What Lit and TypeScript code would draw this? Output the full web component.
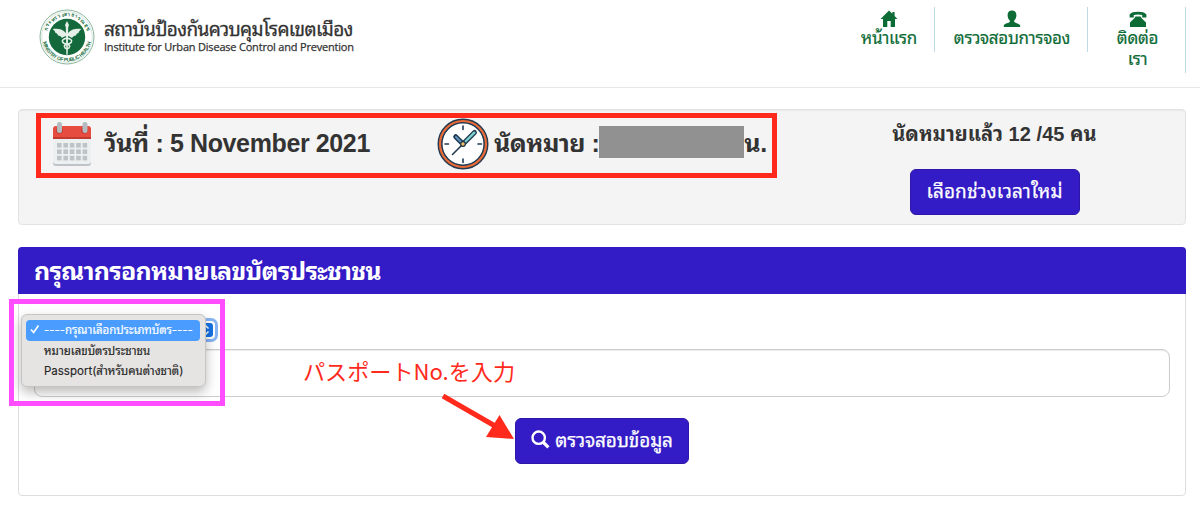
import { LitElement, html, css, svg } from 'lit';
import { customElement, property, state } from 'lit/decorators.js';
import { classMap } from 'lit/directives/class-map.js';

const icons = {
  home: svg`<path d="M9 0.5 L0.5 9 H3 V17 H7.3 V11 H10.7 V17 H15 V9 H17.5 L14.6 6 V2 H12.4 V3.8 Z" />`,
  user: svg`<path d="M9 0.5 C6 0.5 4.6 2.4 4.6 5 C4.6 7.4 5.4 9.4 6.8 10.4 V11.8 C6.2 13.2 1.2 13.4 0.8 15.6 V17 H17.2 V15.6 C16.8 13.4 11.8 13.2 11.2 11.8 V10.4 C12.6 9.4 13.4 7.4 13.4 5 C13.4 2.4 12 0.5 9 0.5 Z" />`,
  phone: svg`<path d="M0.6 7.4 V4.6 C2 2.4 5 1.8 9 1.8 C13 1.8 16 2.4 17.4 4.6 V7.4 H13.2 V5 C11 4.2 7 4.2 4.8 5 V7.4 Z M6.4 6.4 H11.6 L12.4 8 L17 12.4 V17 H1 V12.4 L5.6 8 Z" />`,
};

@customElement('nav-item')
export class NavItem extends LitElement {
  static styles = css`
    :host {
      display: block;
      box-sizing: border-box;
      border-right: 1px solid #bcdbe5;
      padding: 3px 0 0 2px;
      color: #0d6b36;
      font-size: 17px;
      letter-spacing: -0.3px;
      line-height: 21px;
      text-align: center;
      -webkit-text-stroke: 0.2px;
    }
    .icon {
      display: block;
      width: 18px;
      height: 18px;
      margin: 0 auto;
      fill: currentColor;
    }
    .label {
      display: block;
      white-space: pre-line;
    }
  `;

  @property() icon: keyof typeof icons = 'home';
  @property() label = '';

  render() {
    return html`
      <svg class="icon" viewBox="0 0 18 18">${icons[this.icon]}</svg>
      <span class="label">${this.label}</span>
    `;
  }
}

@customElement('moph-logo')
export class MophLogo extends LitElement {
  static styles = css`
    :host {
      display: block;
      width: 56px;
      height: 56px;
    }
    .ring-text {
      font: bold 5px 'Liberation Sans', sans-serif;
      fill: #1b6f42;
    }
  `;

  render() {
    return html`
      <svg width="56" height="56" viewBox="0 0 56 56">
        <defs>
          <path id="top" d="M7.2 28 A20.8 20.8 0 0 1 48.8 28" />
          <path id="bottom" d="M3.6 28 A24.4 24.4 0 0 0 52.4 28" />
        </defs>
        <circle cx="28" cy="28" r="27" fill="#fff" stroke="#8ab59b" stroke-width="1" />
        <circle cx="28" cy="28" r="25.3" fill="none" stroke="#bcd5c6" stroke-width=".6" />
        <circle cx="28" cy="28" r="18.2" fill="#13693b" />
        <text class="ring-text"><textPath href="#top" startOffset="50%" text-anchor="middle" textLength="52">กระทรวงสาธารณสุข</textPath></text>
        <text class="ring-text"><textPath href="#bottom" startOffset="50%" text-anchor="middle" textLength="66">MINISTRY OF PUBLIC HEALTH</textPath></text>
        <g fill="#e4efe8">
          <path d="M28 12 L30 16 L29 19 H27 L26 16 Z M26.8 18 H29.2 L28.7 45 L28 47 L27.3 45 Z" />
          <path d="M27 24 C24 20 19 19 13.5 20 C15 21 16 22 16.5 24 C18 24 18.5 25 19 26.5 C21 26.5 22 27.5 23 29 C24.5 28 26 27 27 27 Z" />
          <path d="M29 24 C32 20 37 19 42.5 20 C41 21 40 22 39.5 24 C38 24 37.5 25 37 26.5 C35 26.5 34 27.5 33 29 C31.5 28 30 27 29 27 Z" />
        </g>
        <path d="M28 29 C20 31 24 35 28 35 C32 36 31 39 28 40 M28 29 C36 31 32 35 28 35 C24 36 25 39 28 40" fill="none" stroke="#e4efe8" stroke-width="1.6" />
      </svg>
    `;
  }
}

@customElement('app-root')
export class AppRoot extends LitElement {
  static styles = css`
    :host {
      display: block;
      position: relative;
      box-sizing: border-box;
      height: 514px;
      overflow: hidden;
      background: #fff;
      color: #333;
      font-family: 'Liberation Sans', 'Noto Sans Thai Looped', Loma, 'Noto Sans Thai', sans-serif;
    }
    .header {
      display: flex;
      justify-content: space-between;
      box-sizing: border-box;
      height: 88px;
      padding: 7px 14px 0 39px;
      border-bottom: 1px solid #e7e7e7;
    }
    .brand {
      display: flex;
      gap: 9px;
      padding-top: 2px;
    }
    .brand-th {
      padding-top: 9px;
      margin-bottom: -2px;
      font-size: 19px;
      letter-spacing: -0.64px;
      line-height: 24px;
      white-space: nowrap;
      -webkit-text-stroke: 0.3px;
    }
    .brand-en {
      font: 11px/13px 'Open Sans', sans-serif;
      letter-spacing: -0.2px;
      white-space: nowrap;
      -webkit-text-stroke: 0.25px;
    }
    .nav {
      display: grid;
      grid-template-columns: 93px 153px 98px;
      align-items: start;
    }
    .nav-item {
      height: 45px;
    }
    .nav-item.tall {
      height: 66px;
    }
    .summary {
      display: grid;
      grid-template-columns: 402px 389px 1fr;
      box-sizing: border-box;
      height: 116px;
      margin: 21px 14px 0 18px;
      padding-left: 33px;
      border: 1px solid #e3e3e3;
      border-radius: 4px;
      background: #f4f4f4;
      box-shadow: inset 0 1px 1px rgba(0, 0, 0, 0.05);
    }
    .fact {
      display: flex;
      align-items: center;
      height: 68px;
      font-size: 25px;
      font-weight: bold;
      white-space: nowrap;
    }
    .date {
      gap: 12px;
    }
    .date-text,
    .slot-text,
    .unit {
      padding-bottom: 6px;
    }
    .date-text {
      letter-spacing: -0.38px;
    }
    .slot-text {
      letter-spacing: -0.5px;
    }
    .redacted {
      width: 145px;
      height: 32px;
      margin-top: -4px;
      background: #919191;
    }
    .unit {
      letter-spacing: -0.5px;
    }
    .clock {
      margin: 0 5px 0 -17px;
    }
    .quota {
      display: flex;
      flex-direction: column;
      align-items: center;
      padding-right: 39px;
    }
    .quota-text {
      padding-top: 9px;
      margin-bottom: 20px;
      font-size: 20px;
      font-weight: bold;
      letter-spacing: 0.05px;
      line-height: 30px;
      white-space: nowrap;
    }
    .button {
      display: flex;
      align-items: center;
      justify-content: center;
      gap: 5px;
      box-sizing: border-box;
      height: 46px;
      padding: 0;
      border: 1px solid #2e17a8;
      border-radius: 6px;
      background: #331bc6;
      color: #fff;
      font: 19px 'Liberation Sans', 'Noto Sans Thai Looped', Loma, 'Noto Sans Thai', sans-serif;
      white-space: nowrap;
      -webkit-text-stroke: 0.25px;
    }
    .pick-time {
      width: 170px;
      letter-spacing: 0.1px;
    }
    .pick-text,
    .lookup-text {
      padding-bottom: 6px;
    }
    .lookup-icon {
      margin-bottom: 3px;
    }
    .lookup {
      width: 174px;
      margin: 21px auto 0 496px;
      letter-spacing: -0.15px;
    }
    .panel {
      box-sizing: border-box;
      height: 249px;
      margin: 22px 14px 0 18px;
      border: 1px solid #ddd;
      border-radius: 4px;
    }
    .panel-title {
      height: 47px;
      margin: -1px -1px 0;
      padding-left: 16px;
      border-radius: 4px 4px 0 0;
      background: #331bc6;
      color: #fff;
      font-size: 25px;
      font-weight: bold;
      letter-spacing: -0.75px;
      line-height: 49px;
      white-space: nowrap;
    }
    .select {
      display: flex;
      justify-content: flex-end;
      align-items: center;
      box-sizing: border-box;
      width: 179px;
      height: 18px;
      margin: 27px 0 0 17px;
      padding-right: 2px;
      border-radius: 4px;
      background: #fff;
      box-shadow: 0 0 0 3px #86b4f4;
    }
    .card-no {
      display: block;
      box-sizing: border-box;
      width: 1136px;
      height: 48px;
      margin: 10px 0 0 15px;
      border: 1px solid #ccc;
      border-radius: 8px;
      box-shadow: inset 0 1px 1px rgba(0, 0, 0, 0.08);
    }
    .menu {
      position: absolute;
      left: 21px;
      top: 314px;
      box-sizing: border-box;
      width: 185px;
      height: 73px;
      padding: 5px 5px 5px 4px;
      border: 1px solid #c7c5c3;
      border-radius: 6px;
      background: #e6e4e2;
      box-shadow: 0 5px 12px rgba(0, 0, 0, 0.28);
    }
    .option {
      display: flex;
      align-items: center;
      height: 20.5px;
      border-radius: 4px;
      color: #262626;
      font: 11.5px Inter, 'Noto Sans Thai Looped', Loma, 'Noto Sans Thai', sans-serif;
      white-space: nowrap;
      -webkit-text-stroke: 0.15px;
    }
    .option.selected {
      background: #4a9dff;
      color: #fff;
      letter-spacing: -0.06px;
    }
    .option-text {
      padding-bottom: 2px;
    }
    .tick {
      width: 18px;
      padding-left: 4px;
      box-sizing: border-box;
    }
    .mark {
      position: absolute;
      box-sizing: border-box;
      pointer-events: none;
    }
    .mark-red {
      left: 36px;
      top: 113px;
      width: 741px;
      height: 65px;
      border: 5px solid #ff2a1c;
    }
    .mark-pink {
      left: 9px;
      top: 299px;
      width: 216px;
      height: 107px;
      border: 5px solid #ff4dff;
    }
    .note {
      position: absolute;
      left: 303px;
      top: 354px;
      color: #ff2a1c;
      font: 400 22.1px/32px 'Noto Sans CJK JP', sans-serif;
      white-space: nowrap;
    }
    .arrow {
      position: absolute;
      left: 440px;
      top: 390px;
    }
  `;

  @state() private selected = 0;

  private options = ['----กรุณาเลือกประเภทบัตร----', 'หมายเลขบัตรประชาชน', 'Passport(สำหรับคนต่างชาติ)'];

  private renderCalendar() {
    const cells = [0, 1, 2].flatMap((row) =>
      [0, 1, 2, 3, 4].map((col) => svg`<rect x=${5 + col * 6.4} y=${22 + row * 6.4} width="4.6" height="4.6" />`)
    );
    return html`
      <svg width="40" height="46" viewBox="0 0 40 46">
        <path d="M1 16 H39 V42 Q39 45 36 45 H4 Q1 45 1 42 Z" fill="#bdc3c7" />
        <path d="M1 14 H39 V40 Q39 43 36 43 H4 Q1 43 1 40 Z" fill="#ecf0f1" />
        <path d="M1 18 V8 Q1 5 4 5 H36 Q39 5 39 8 V18 Z" fill="#e64c40" />
        <path d="M1 16 H39 V18 H1 Z" fill="#c23b30" />
        <circle cx="7.5" cy="9.5" r="3.3" fill="#bd3a30" />
        <circle cx="32.5" cy="9.5" r="3.3" fill="#bd3a30" />
        <rect x="5" y="1" width="5" height="11" rx="2.5" fill="#b4bcc1" />
        <rect x="30.5" y="1" width="5" height="11" rx="2.5" fill="#b4bcc1" />
        <g fill="#bdc3c7">${cells}</g>
      </svg>
    `;
  }

  private renderClock() {
    return html`
      <svg class="clock" width="52" height="52" viewBox="0 0 52 52">
        <circle cx="26" cy="26" r="24" fill="#fff" stroke="#213a52" stroke-width="3" />
        <circle cx="26" cy="26" r="21.4" fill="none" stroke="#213a52" stroke-width="2" />
        <circle cx="26" cy="26" r="23" fill="none" stroke="#ea6a35" stroke-width="2.2" />
        <g stroke="#213a52" stroke-width="1.6" stroke-linecap="round">
          <path d="M26 8 V11.5 M26 41 V44.5 M8 26 H11.5 M41 26 H44.5" />
          <path d="M26 26 L15.5 36.5" />
          <path d="M26 26 L18.7 18.7" stroke-width="5" />
          <path d="M26 26 L37.5 14.5" stroke-width="5" />
        </g>
        <path d="M24 24 L19 19" stroke="#6194bf" stroke-width="2" stroke-linecap="round" />
        <path d="M28.5 23.5 L37.3 14.7" stroke="#7bd0cc" stroke-width="2.4" stroke-linecap="round" />
        <circle cx="26" cy="26" r="2.3" fill="#f5c063" stroke="#213a52" stroke-width="1.2" />
      </svg>
    `;
  }

  render() {
    return html`
      <header class="header">
        <div class="brand">
          <moph-logo></moph-logo>
          <div>
            <div class="brand-th">สถาบันป้องกันควบคุมโรคเขตเมือง</div>
            <div class="brand-en">Institute for Urban Disease Control and Prevention</div>
          </div>
        </div>
        <nav class="nav">
          <nav-item class="nav-item" icon="home" label="หน้าแรก"></nav-item>
          <nav-item class="nav-item" icon="user" label="ตรวจสอบการจอง"></nav-item>
          <nav-item class="nav-item tall" icon="phone" .label=${'ติดต่อ\nเรา'}></nav-item>
        </nav>
      </header>

      <section class="summary">
        <div class="fact date">${this.renderCalendar()}<span class="date-text">วันที่ : 5 November 2021</span></div>
        <div class="fact">
          ${this.renderClock()}<span class="slot-text">นัดหมาย :</span><span class="redacted"></span><span class="unit">น.</span>
        </div>
        <div class="quota">
          <div class="quota-text">นัดหมายแล้ว 12 /45 คน</div>
          <button class="button pick-time"><span class="pick-text">เลือกช่วงเวลาใหม่</span></button>
        </div>
      </section>

      <section class="panel">
        <div class="panel-title">กรุณากรอกหมายเลขบัตรประชาชน</div>
        <div class="select">
          <svg width="14" height="14" viewBox="0 0 14 14">
            <rect width="14" height="14" rx="3" fill="#1673e6" />
            <path d="M4.5 5.5 L7 3 L9.5 5.5 M4.5 8.5 L7 11 L9.5 8.5" fill="none" stroke="#fff" stroke-width="1.5" />
          </svg>
        </div>
        <input class="card-no" />
        <button class="button lookup">
          <svg class="lookup-icon" width="19" height="19" viewBox="0 0 19 19" fill="none" stroke="#fff">
            <circle cx="7.7" cy="7.7" r="6.2" stroke-width="2.4" />
            <path d="M12 12 L17.4 17.4" stroke-width="3.2" />
          </svg>
          <span class="lookup-text">ตรวจสอบข้อมูล</span>
        </button>
      </section>

      <div class="menu">
        ${this.options.map(
          (option, i) => html`
            <div class=${classMap({ option: true, selected: i === this.selected })} @click=${() => (this.selected = i)}>
              <span class="tick">${i === this.selected
                ? html`<svg width="10" height="10" viewBox="0 0 10 10"><path d="M1 5.5 L3.6 8.5 L8.5 1.5" fill="none" stroke="#fff" stroke-width="1.6" /></svg>`
                : ''}</span>
              <span class="option-text">${option}</span>
            </div>
          `
        )}
      </div>

      <div class="mark mark-red"></div>
      <div class="mark mark-pink"></div>
      <div class="note">パスポートNo.を入力</div>
      <svg class="arrow" width="76" height="52" viewBox="0 0 76 52">
        <path d="M3 6 L62 40" stroke="#ff2a1c" stroke-width="5" />
        <path d="M74 49 L46 47 L59.5 25 Z" fill="#ff2a1c" />
      </svg>
    `;
  }
}
